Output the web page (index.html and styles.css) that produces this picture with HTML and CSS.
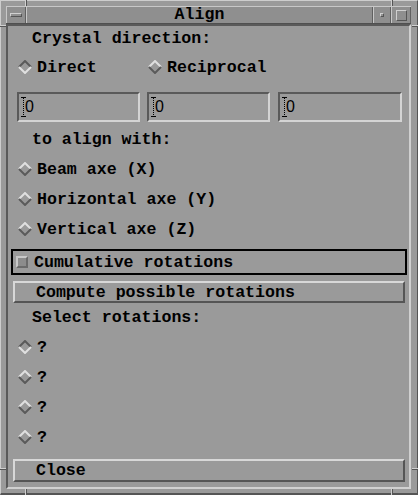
FILE: index.html
```html
<!DOCTYPE html>
<html>
<head>
<meta charset="utf-8">
<link rel="stylesheet" href="styles.css">
</head>
<body>
<div class="window">
  <div class="titlebar">
    <div class="tb-btn tb-menu"><span class="menu-bar"></span></div>
    <div class="tb-title">Align</div>
    <div class="tb-btn tb-min"><span class="min-sq"></span></div>
    <div class="tb-btn tb-max"><span class="max-sq"></span></div>
  </div>
  <div class="content">
    <div class="label label-top">Crystal direction:</div>
    <div class="radio-line">
      <div class="radio radio-first selected"><svg class="diamond" viewBox="0 0 14 14"><polyline class="d-top" points="1,7 7,1 13,7"/><polyline class="d-bot" points="1,7 7,13 13,7"/></svg><span>Direct</span></div>
      <div class="radio"><svg class="diamond" viewBox="0 0 14 14"><polyline class="d-top" points="1,7 7,1 13,7"/><polyline class="d-bot" points="1,7 7,13 13,7"/></svg><span>Reciprocal</span></div>
    </div>
    <div class="fields">
      <div class="field"><svg class="ibeam" viewBox="0 0 5 20"><line x1="2.5" y1="1" x2="2.5" y2="19"/><line class="serif" x1="0" y1="0.5" x2="5" y2="0.5"/><line class="serif" x1="0" y1="19.5" x2="5" y2="19.5"/></svg><span class="val">0</span></div>
      <div class="field"><svg class="ibeam" viewBox="0 0 5 20"><line x1="2.5" y1="1" x2="2.5" y2="19"/><line class="serif" x1="0" y1="0.5" x2="5" y2="0.5"/><line class="serif" x1="0" y1="19.5" x2="5" y2="19.5"/></svg><span class="val">0</span></div>
      <div class="field field-last"><svg class="ibeam" viewBox="0 0 5 20"><line x1="2.5" y1="1" x2="2.5" y2="19"/><line class="serif" x1="0" y1="0.5" x2="5" y2="0.5"/><line class="serif" x1="0" y1="19.5" x2="5" y2="19.5"/></svg><span class="val">0</span></div>
    </div>
    <div class="label label-mid">to align with:</div>
    <div class="radio-row"><div class="radio"><svg class="diamond" viewBox="0 0 14 14"><polyline class="d-top" points="1,7 7,1 13,7"/><polyline class="d-bot" points="1,7 7,13 13,7"/></svg><span>Beam axe (X)</span></div></div>
    <div class="radio-row"><div class="radio"><svg class="diamond" viewBox="0 0 14 14"><polyline class="d-top" points="1,7 7,1 13,7"/><polyline class="d-bot" points="1,7 7,13 13,7"/></svg><span>Horizontal axe (Y)</span></div></div>
    <div class="radio-row"><div class="radio"><svg class="diamond" viewBox="0 0 14 14"><polyline class="d-top" points="1,7 7,1 13,7"/><polyline class="d-bot" points="1,7 7,13 13,7"/></svg><span>Vertical axe (Z)</span></div></div>
    <div class="check-frame"><span class="checkbox"></span><span>Cumulative rotations</span></div>
    <div class="button btn-compute">Compute possible rotations</div>
    <div class="label label-sel">Select rotations:</div>
    <div class="radio-row"><div class="radio selected"><svg class="diamond" viewBox="0 0 14 14"><polyline class="d-top" points="1,7 7,1 13,7"/><polyline class="d-bot" points="1,7 7,13 13,7"/></svg><span>?</span></div></div>
    <div class="radio-row"><div class="radio"><svg class="diamond" viewBox="0 0 14 14"><polyline class="d-top" points="1,7 7,1 13,7"/><polyline class="d-bot" points="1,7 7,13 13,7"/></svg><span>?</span></div></div>
    <div class="radio-row"><div class="radio"><svg class="diamond" viewBox="0 0 14 14"><polyline class="d-top" points="1,7 7,1 13,7"/><polyline class="d-bot" points="1,7 7,13 13,7"/></svg><span>?</span></div></div>
    <div class="radio-row"><div class="radio"><svg class="diamond" viewBox="0 0 14 14"><polyline class="d-top" points="1,7 7,1 13,7"/><polyline class="d-bot" points="1,7 7,13 13,7"/></svg><span>?</span></div></div>
    <div class="button btn-close">Close</div>
  </div>
  <span class="notch nv n-top-l"></span>
  <span class="notch nv n-top-r"></span>
  <span class="notch nv n-bot-l"></span>
  <span class="notch nv n-bot-r"></span>
  <span class="notch nh n-left-t"></span>
  <span class="notch nh n-left-b"></span>
  <span class="notch nh n-right-t"></span>
  <span class="notch nh n-right-b"></span>
</div>
</body>
</html>
```

FILE: styles.css
```css
html, body {
  margin: 0;
  padding: 0;
  background: #9a9a9a;
}

body {
  font-family: "Liberation Mono", "DejaVu Sans Mono", monospace;
  font-weight: bold;
  font-size: 16.6px;
  color: #000;
}

.window {
  position: relative;
  width: 418px;
  height: 495px;
  box-sizing: border-box;
  background: #9a9a9a;
  border-top: 1px solid #cdcdcd;
  border-left: 1px solid #cdcdcd;
  border-right: 1px solid #555;
  border-bottom: 2px solid #555;
  padding: 5px 6px 4px 5px;
  display: flex;
  flex-direction: column;
}

/* title bar */
.titlebar {
  height: 18px;
  box-sizing: border-box;
  display: flex;
  background: #8f8f8f;
  border-top: 1px solid #c8c8c8;
  border-bottom: 1px solid #505050;
}

.tb-btn {
  display: flex;
  align-items: center;
  justify-content: center;
  box-sizing: border-box;
  border-left: 1px solid #c8c8c8;
  border-right: 1px solid #606060;
}

.tb-menu { width: 20px; }
.tb-min { width: 18px; }
.tb-max { width: 20px; }

.menu-bar {
  width: 10px;
  height: 2px;
  border-top: 1px solid #d0d0d0;
  border-left: 1px solid #d0d0d0;
  border-bottom: 1px solid #555;
  border-right: 1px solid #555;
  background: #8f8f8f;
}

.min-sq {
  width: 2px;
  height: 2px;
  border-top: 1px solid #d0d0d0;
  border-left: 1px solid #d0d0d0;
  border-bottom: 1px solid #555;
  border-right: 1px solid #555;
}

.max-sq {
  width: 9px;
  height: 9px;
  border-top: 1px solid #d0d0d0;
  border-left: 1px solid #d0d0d0;
  border-bottom: 1px solid #555;
  border-right: 1px solid #555;
}

.tb-title {
  flex: 1;
  text-align: center;
  line-height: 16px;
  border-left: 1px solid #c8c8c8;
  border-right: 1px solid #606060;
}

/* content */
.content {
  flex: 1;
  box-sizing: border-box;
  border-top: 2px solid #5a5a5a;
  border-left: 2px solid #5a5a5a;
  border-bottom: 2px solid #d0d0d0;
  border-right: 2px solid #d0d0d0;
  display: flex;
  flex-direction: column;
}

.label {
  padding-left: 24px;
  display: flex;
  align-items: center;
  white-space: pre;
}

.label-top { height: 24px; }
.label-mid { height: 29px; margin-top: 3px; }
.label-sel { height: 29px; }

.radio-line {
  height: 34px;
  display: flex;
  align-items: center;
  padding-left: 10px;
}

.radio-first { width: 130px; }

.radio-row {
  height: 30px;
  display: flex;
  align-items: center;
  padding-left: 10px;
}

.radio {
  display: flex;
  align-items: center;
  white-space: pre;
}

.diamond {
  width: 14px;
  height: 14px;
  margin-right: 5px;
  flex: none;
}

.diamond polyline {
  fill: none;
  stroke-width: 2;
}

.d-top { stroke: #e0e0e0; }
.d-bot { stroke: #5a5a5a; }

.selected .d-top { stroke: #5a5a5a; }
.selected .d-bot { stroke: #e0e0e0; }

/* text fields */
.fields {
  margin-top: 8px;
  height: 30px;
  display: flex;
  padding-left: 9px;
  gap: 7px;
}

.field {
  width: 123px;
  height: 30px;
  box-sizing: border-box;
  border-top: 2px solid #5a5a5a;
  border-left: 2px solid #5a5a5a;
  border-bottom: 2px solid #d4d4d4;
  border-right: 2px solid #d4d4d4;
  display: flex;
  align-items: center;
  padding-left: 2px;
}

.field-last {
  width: 124px;
  margin-left: 1px;
}

.ibeam {
  width: 5px;
  height: 20px;
  flex: none;
}

.ibeam line {
  stroke: #000;
  stroke-width: 1;
  stroke-dasharray: 1 1;
}

.ibeam .serif {
  stroke-dasharray: none;
}

.val {
  font-family: "Liberation Sans", Arial, sans-serif;
  font-weight: normal;
  font-size: 16px;
  margin-left: -1px;
}

/* checkbox */
.check-frame {
  margin: 5px 2px 0 3px;
  height: 26px;
  box-sizing: border-box;
  border: 2px solid #000;
  display: flex;
  align-items: center;
  padding-left: 3px;
  white-space: pre;
}

.checkbox {
  width: 8px;
  height: 8px;
  margin-right: 6px;
  border-top: 2px solid #c8c8c8;
  border-left: 2px solid #c8c8c8;
  border-bottom: 2px solid #6a6a6a;
  border-right: 2px solid #6a6a6a;
  background: #8c8c8c;
}

/* push buttons */
.button {
  margin: 0 4px 0 5px;
  box-sizing: border-box;
  border-top: 2px solid #d8d8d8;
  border-left: 2px solid #d8d8d8;
  border-bottom: 2px solid #555;
  border-right: 2px solid #555;
  display: flex;
  align-items: center;
  padding-left: 21px;
  white-space: pre;
}

.btn-compute { margin-top: 6px; height: 22px; }
.btn-close { margin-top: 7px; height: 23px; }

/* frame resize notches */
.notch {
  position: absolute;
  box-sizing: border-box;
}

.nv {
  width: 2px;
  height: 6px;
  border-left: 1px solid #d0d0d0;
  border-right: 1px solid #555;
}

.nh {
  width: 6px;
  height: 2px;
  border-top: 1px solid #d0d0d0;
  border-bottom: 1px solid #555;
}

.n-top-l { left: 24px; top: -1px; }
.n-top-r { left: 390px; top: -1px; }
.n-bot-l { left: 24px; bottom: -2px; }
.n-bot-r { left: 390px; bottom: -2px; }
.n-left-t { left: -1px; top: 24px; }
.n-left-b { left: -1px; top: 467px; }
.n-right-t { right: -1px; top: 24px; }
.n-right-b { right: -1px; top: 467px; }
```
